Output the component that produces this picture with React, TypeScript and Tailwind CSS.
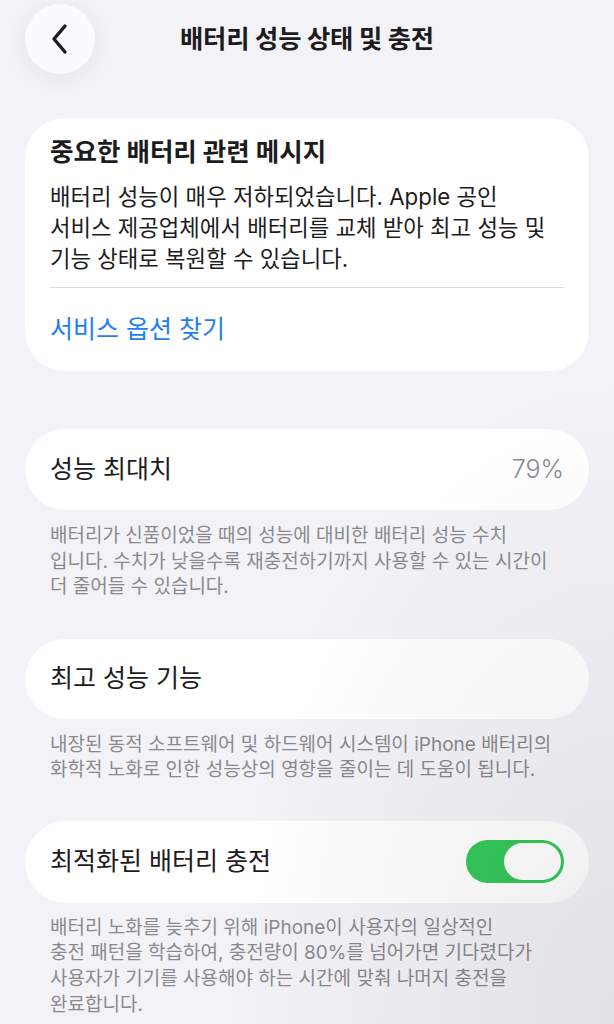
import React from "react";

const font = "font-['Inter','Noto_Sans_CJK_KR',sans-serif]";

function Toggle() {
  return (
    <div className="w-[98px] h-[43px] rounded-full bg-[#34c759] flex items-center justify-end pr-[3px]">
      <div className="w-[57px] h-[37px] rounded-full bg-white" />
    </div>
  );
}

export default function App() {
  return (
    <div className={`relative w-[614px] h-[1024px] overflow-hidden bg-[#f2f2f7] ${font} antialiased`}>
      {/* header */}
      <div className="flex items-center px-[25px] pt-[4px]">
        <div className="w-[70px] h-[70px] rounded-full bg-[#fbfbfd] shadow-[0_4px_24px_rgba(0,0,0,0.06)] flex items-center justify-center">
          <svg width="22" height="32" viewBox="0 0 22 32" fill="none">
            <path d="M16 3 L5 16 L16 29" stroke="#1c1c1e" strokeWidth="3.4" strokeLinecap="round" strokeLinejoin="round" />
          </svg>
        </div>
        <div className="flex-1 text-center text-[25.3px] leading-[32px] font-bold text-[#1c1c1e] tracking-[-0.2px]">
          배터리 성능 상태 및 충전
        </div>
        <div className="w-[70px]" />
      </div>

      <div className="px-[25px]">
        {/* card 1 */}
        <div className="mt-[44px] bg-white rounded-[40px] px-[25px] pt-[17px] pb-[26px]">
          <div className="text-[25.5px] leading-[33px] font-bold text-[#1c1c1e]">
            중요한 배터리 관련 메시지
          </div>
          <div className="mt-[13px] text-[22.3px] leading-[31px] text-[#1c1c1e]">
            배터리 성능이 매우 저하되었습니다. Apple 공인
            <br />
            서비스 제공업체에서 배터리를 교체 받아 최고 성능 및
            <br />
            기능 상태로 복원할 수 있습니다.
          </div>
          <div className="mt-[13px] h-px bg-[#dcdce0]" />
          <div className="mt-[25px] text-[25px] leading-[32px] text-[#1f7ff2]">
            서비스 옵션 찾기
          </div>
        </div>

        {/* card 2 */}
        <div className="mt-[58px] h-[81px] bg-white rounded-full px-[25px] flex items-center justify-between">
          <span className="text-[25px] text-[#1c1c1e]">성능 최대치</span>
          <span className="text-[25px] font-light text-[#8a8a8e]">79%</span>
        </div>
        <div className="mt-[13px] px-[25px] text-[19px] leading-[25.5px] text-[#8a8a8e]">
          배터리가 신품이었을 때의 성능에 대비한 배터리 성능 수치
          <br />
          입니다. 수치가 낮을수록 재충전하기까지 사용할 수 있는 시간이
          <br />
          더 줄어들 수 있습니다.
        </div>

        {/* card 3 */}
        <div className="mt-[39px] h-[80px] bg-white rounded-full px-[25px] flex items-center">
          <span className="text-[25px] text-[#1c1c1e]">최고 성능 기능</span>
        </div>
        <div className="mt-[13px] px-[25px] text-[19px] leading-[25.5px] text-[#8a8a8e]">
          내장된 동적 소프트웨어 및 하드웨어 시스템이 iPhone 배터리의
          <br />
          화학적 노화로 인한 성능상의 영향을 줄이는 데 도움이 됩니다.
        </div>

        {/* card 4 */}
        <div className="mt-[38px] h-[82px] bg-white rounded-full pl-[25px] pr-[25px] flex items-center justify-between">
          <span className="text-[25px] text-[#1c1c1e]">최적화된 배터리 충전</span>
          <Toggle />
        </div>
        <div className="mt-[12px] px-[25px] text-[19px] leading-[25.8px] text-[#8a8a8e]">
          배터리 노화를 늦추기 위해 iPhone이 사용자의 일상적인
          <br />
          충전 패턴을 학습하여, 충전량이 80%를 넘어가면 기다렸다가
          <br />
          사용자가 기기를 사용해야 하는 시간에 맞춰 나머지 충전을
          <br />
          완료합니다.
        </div>
      </div>

      {/* vignette in bottom-right corner */}
      <div className="pointer-events-none absolute inset-0 bg-[radial-gradient(ellipse_at_100%_100%,rgba(0,0,0,0.07),rgba(0,0,0,0)_45%)]" />
    </div>
  );
}
